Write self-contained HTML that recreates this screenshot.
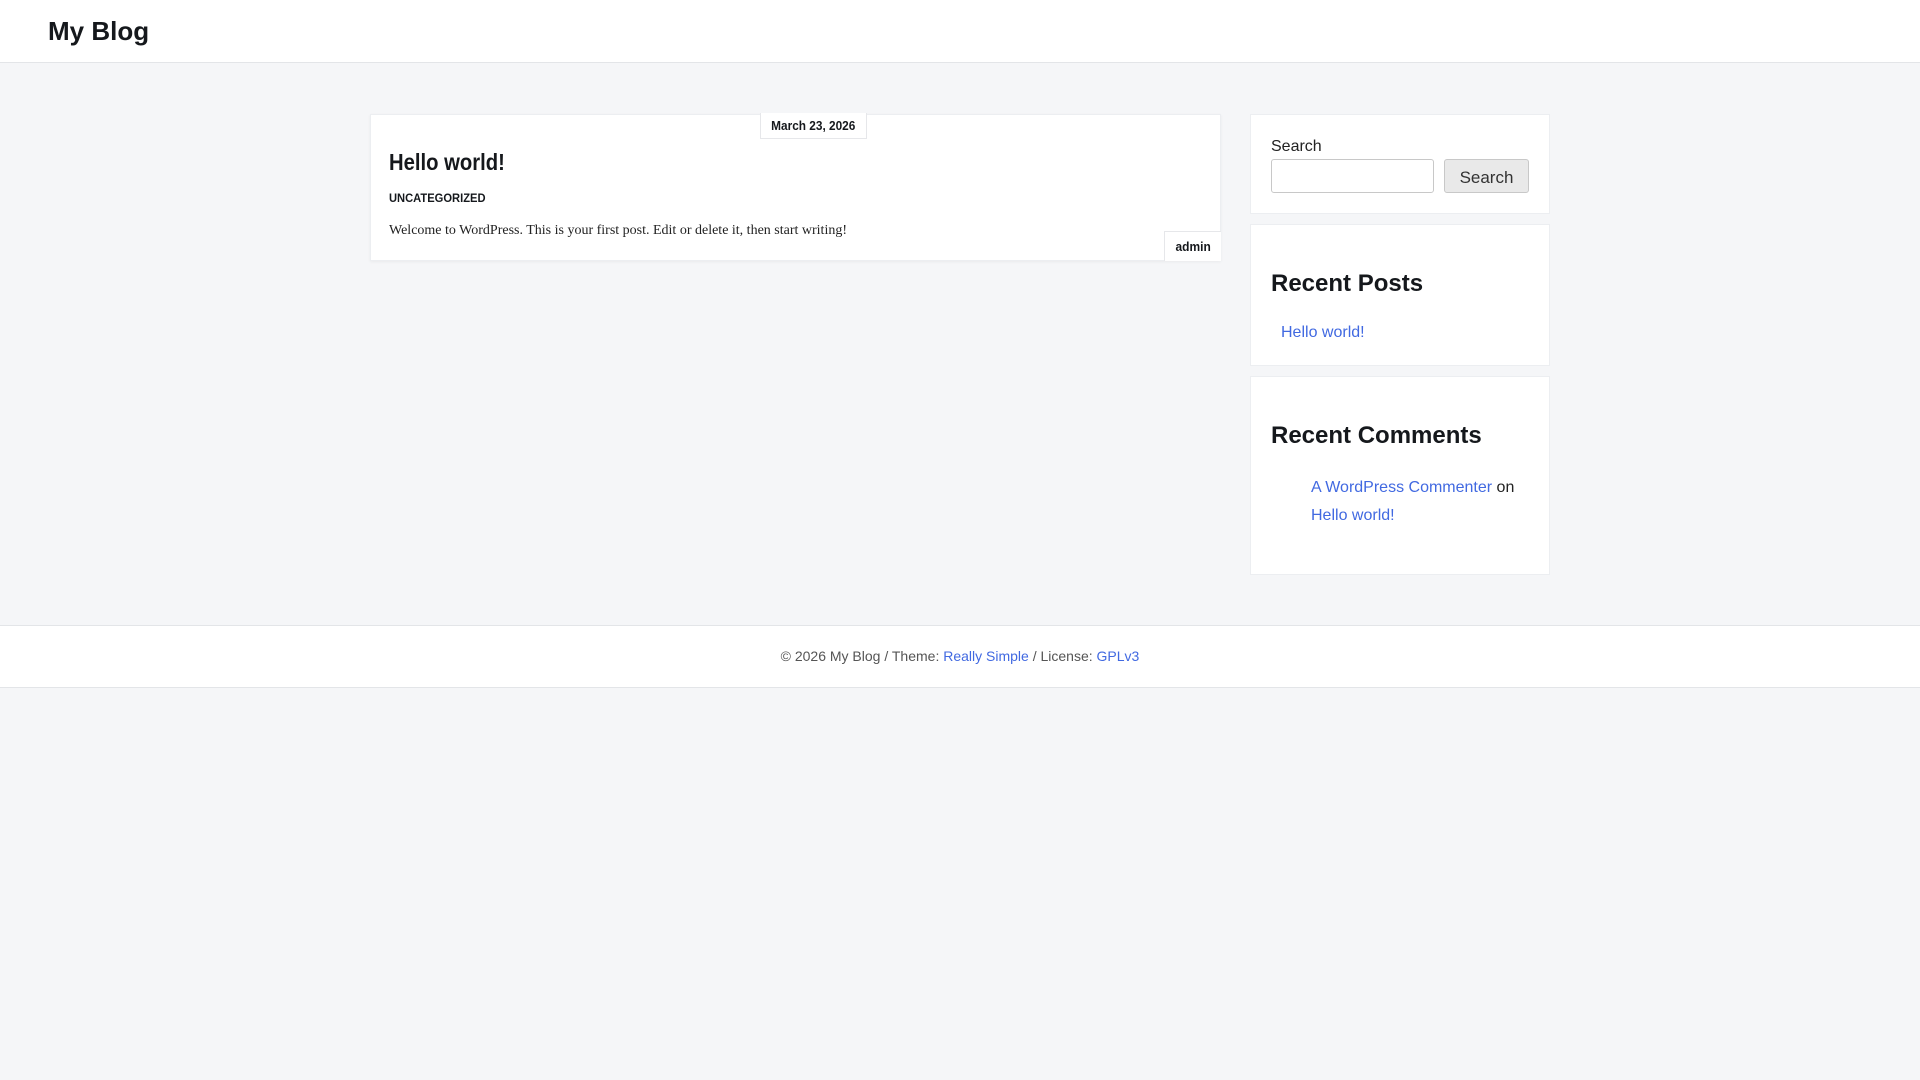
<!DOCTYPE html>
<html><head><meta charset="utf-8"><style>
*{margin:0;padding:0;box-sizing:border-box}
body{width:1920px;height:1080px;background:#f5f6f8;font-family:"Liberation Sans",sans-serif;color:#111;position:relative;overflow:hidden}
.abs{position:absolute}
header{position:absolute;left:0;top:0;width:1920px;height:63px;background:#fff;border-bottom:1px solid #e3e5e8}
.logo{left:48px;top:16px;font-size:26px;font-weight:bold;color:#15181c}
.card{background:#fff;border:1px solid #eceef1}
.cond{font-family:"Liberation Sans",sans-serif;font-weight:bold;color:#15181c}
.sx{display:inline-block;transform-origin:left center}
a{color:#4169e1;text-decoration:none}
.badge{background:#fff;border:1px solid #e6e7ea;font-size:13px;text-align:center}
.h{font-size:24px;font-weight:bold;color:#15181c}
</style></head><body>
<header><div class="abs logo">My Blog</div></header>

<div class="abs card" style="left:370px;top:114px;width:851px;height:147px;box-shadow:0 1px 3px rgba(0,0,0,.05)"></div>
<div class="abs badge cond" style="left:760px;top:113px;width:107px;height:26px;line-height:26px;border-top:none"><span class="sx" style="transform:scaleX(0.91);transform-origin:center">March 23, 2026</span></div>
<div class="abs cond" style="left:389px;top:149px;font-size:23px"><span class="sx" style="transform:scaleX(0.88)">Hello world!</span></div>
<div class="abs cond" style="left:389px;top:191px;font-size:12px"><span class="sx" style="transform:scaleX(0.93)">UNCATEGORIZED</span></div>
<div class="abs" style="left:389px;top:223px;font-family:'Liberation Serif',serif;font-size:14px;letter-spacing:0;color:#222">Welcome to WordPress. This is your first post. Edit or delete it, then start writing!</div>
<div class="abs badge cond" style="left:1164px;top:231px;width:57px;height:30px;line-height:30px;border-right:none;border-bottom:none"><span class="sx" style="transform:scaleX(0.92);transform-origin:center">admin</span></div>

<div class="abs card" style="left:1250px;top:114px;width:300px;height:100px"></div>
<div class="abs" style="left:1271px;top:138px;font-size:16px;color:#222">Search</div>
<div class="abs" style="left:1271px;top:159px;width:163px;height:34px;border:1px solid #c8c8c8;border-radius:3px;background:#fff"></div>
<div class="abs" style="left:1444px;top:159px;width:85px;height:34px;border:1px solid #c8c8c8;border-radius:3px;background:#e9e9e9;font-size:17px;color:#333;text-align:center;line-height:35px">Search</div>

<div class="abs card" style="left:1250px;top:224px;width:300px;height:142px"></div>
<div class="abs h" style="left:1271px;top:270px">Recent Posts</div>
<div class="abs" style="left:1281px;top:324px;font-size:16px"><a>Hello world!</a></div>

<div class="abs card" style="left:1250px;top:376px;width:300px;height:199px"></div>
<div class="abs h" style="left:1271px;top:422px">Recent Comments</div>
<div class="abs" style="left:1311px;top:474px;font-size:16px;line-height:28px;color:#222;width:230px"><a>A WordPress Commenter</a> on <a>Hello world!</a></div>

<div class="abs" style="left:0;top:625px;width:1920px;height:63px;background:#fff;border-top:1px solid #e3e5e8;border-bottom:1px solid #e3e5e8;text-align:center;line-height:61px;font-size:14px;color:#555">© 2026 My Blog / Theme: <a>Really Simple</a> / License: <a>GPLv3</a></div>
</body></html>
